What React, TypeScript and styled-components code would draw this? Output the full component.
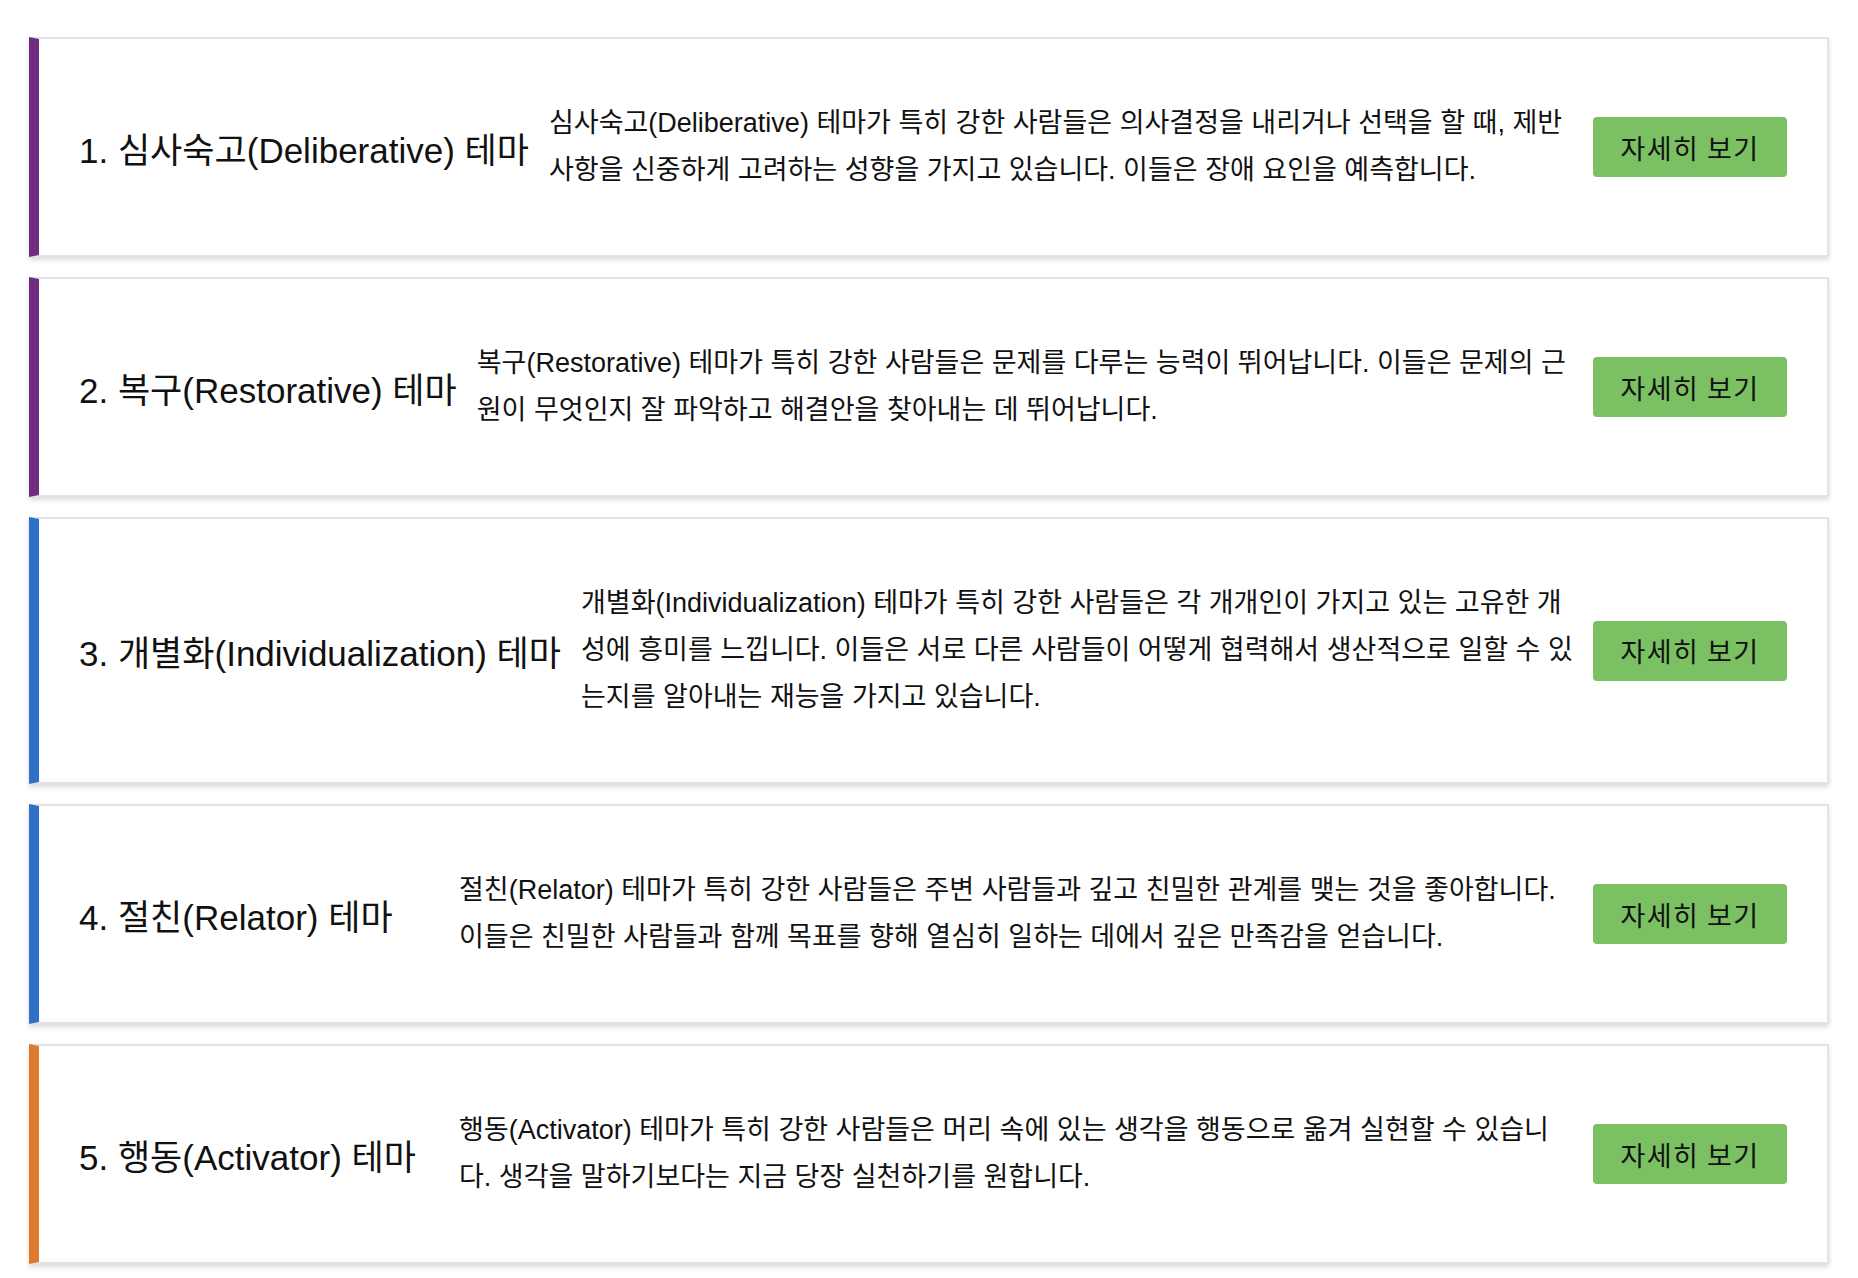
import React from "react";
import styled, { createGlobalStyle } from "styled-components";

export default function App() {
  return (
    <>
      <GlobalStyle />
      <ThemeList>
        {themes.map((theme, index) => (
          <ThemeCard key={index} $accent={theme.color}>
            <ThemeTitle>
              {index + 1}. {theme.title}
            </ThemeTitle>
            <ThemeDesc>{theme.desc}</ThemeDesc>
            <DetailButton type="button">자세히 보기</DetailButton>
          </ThemeCard>
        ))}
      </ThemeList>
    </>
  );
}

// 테마 목록
const themes = [
  {
    title: "심사숙고(Deliberative) 테마",
    desc: "심사숙고(Deliberative) 테마가 특히 강한 사람들은 의사결정을 내리거나 선택을 할 때, 제반 사항을 신중하게 고려하는 성향을 가지고 있습니다. 이들은 장애 요인을 예측합니다.",
    color: "#6f2d7f",
  },
  {
    title: "복구(Restorative) 테마",
    desc: "복구(Restorative) 테마가 특히 강한 사람들은 문제를 다루는 능력이 뛰어납니다. 이들은 문제의 근원이 무엇인지 잘 파악하고 해결안을 찾아내는 데 뛰어납니다.",
    color: "#6f2d7f",
  },
  {
    title: "개별화(Individualization) 테마",
    desc: "개별화(Individualization) 테마가 특히 강한 사람들은 각 개개인이 가지고 있는 고유한 개성에 흥미를 느낍니다. 이들은 서로 다른 사람들이 어떻게 협력해서 생산적으로 일할 수 있는지를 알아내는 재능을 가지고 있습니다.",
    color: "#2f70c9",
  },
  {
    title: "절친(Relator) 테마",
    desc: "절친(Relator) 테마가 특히 강한 사람들은 주변 사람들과 깊고 친밀한 관계를 맺는 것을 좋아합니다. 이들은 친밀한 사람들과 함께 목표를 향해 열심히 일하는 데에서 깊은 만족감을 얻습니다.",
    color: "#2f70c9",
  },
  {
    title: "행동(Activator) 테마",
    desc: "행동(Activator) 테마가 특히 강한 사람들은 머리 속에 있는 생각을 행동으로 옮겨 실현할 수 있습니다. 생각을 말하기보다는 지금 당장 실천하기를 원합니다.",
    color: "#de7a2e",
  },
];

const GlobalStyle = createGlobalStyle`
  body {
    margin: 0;
    background: #fff;
    font-family: "Liberation Sans", "Noto Sans CJK KR", sans-serif;
    color: #111;
  }
`;

const ThemeList = styled.div`
  display: flex;
  flex-direction: column;
  gap: 20px;
  padding: 37px 29px 19px;
`;

const ThemeCard = styled.div<{ $accent: string }>`
  display: flex;
  align-items: center;
  gap: 20px;
  padding: 61px 40px;
  background: #fff;
  border: 2px solid #e3e3e3;
  border-left: 10px solid ${(p) => p.$accent};
  box-shadow: 0 3px 5px rgba(0, 0, 0, 0.14);
`;

const ThemeTitle = styled.h3`
  flex: none;
  min-width: 360px;
  margin: 0;
  font-size: 35px;
  font-weight: normal;
  white-space: nowrap;
`;

const ThemeDesc = styled.p`
  flex: 1;
  margin: 0;
  font-size: 27px;
  line-height: 47px;
`;

const DetailButton = styled.button`
  flex: none;
  width: 194px;
  height: 60px;
  padding: 0;
  border: none;
  border-radius: 4px;
  background: #7bc062;
  color: #111;
  font-family: "Noto Sans CJK KR", sans-serif;
  font-size: 27px;
  letter-spacing: 1.5px;
  cursor: pointer;
`;
